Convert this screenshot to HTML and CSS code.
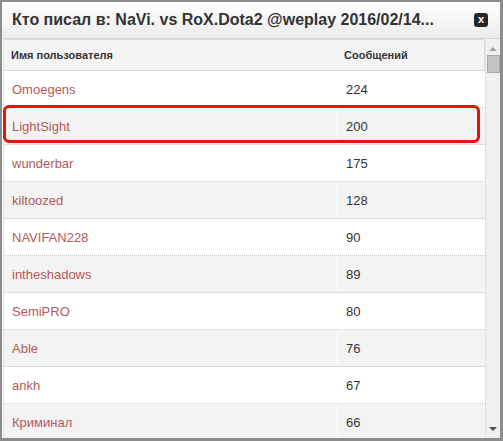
FILE: index.html
```html
<!DOCTYPE html>
<html lang="ru">
<head>
<meta charset="utf-8">
<link rel="stylesheet" href="styles.css">
</head>
<body>
<div class="dialog">
  <div class="titlebar">
    <span class="title">Кто писал в: NaVi. vs RoX.Dota2 @weplay 2016/02/14...</span>
    <span class="close">x</span>
  </div>
  <div class="content">
    <div class="table">
      <div class="head">
        <div class="c1">Имя пользователя</div>
        <div class="c2">Сообщений</div>
      </div>
      <div class="row"><div class="c1 name">Omoegens</div><div class="c2">224</div></div>
      <div class="row alt hl"><div class="c1 name">LightSight</div><div class="c2">200</div><span class="mark"></span></div>
      <div class="row"><div class="c1 name">wunderbar</div><div class="c2">175</div></div>
      <div class="row alt"><div class="c1 name">kiltoozed</div><div class="c2">128</div></div>
      <div class="row"><div class="c1 name">NAVIFAN228</div><div class="c2">90</div></div>
      <div class="row alt"><div class="c1 name">intheshadows</div><div class="c2">89</div></div>
      <div class="row"><div class="c1 name">SemiPRO</div><div class="c2">80</div></div>
      <div class="row alt"><div class="c1 name">Able</div><div class="c2">76</div></div>
      <div class="row"><div class="c1 name">ankh</div><div class="c2">67</div></div>
      <div class="row alt"><div class="c1 name">Криминал</div><div class="c2">66</div></div>
    </div>
    <div class="scrollbar">
      <span class="arrow up"></span>
      <span class="thumb"></span>
      <span class="spacer"></span>
      <span class="arrow down"></span>
    </div>
  </div>
</div>
</body>
</html>
```
FILE: styles.css
```css
html, body {
  margin: 0;
  padding: 0;
  background: #8c8c8c;
  font-family: "Liberation Sans", Arial, sans-serif;
}
body {
  width: 503px;
  height: 441px;
  overflow: hidden;
}
.dialog {
  margin: 2px 0 0 2px;
  width: 498px;
  height: 436px;
  background: #fff;
  display: flex;
  flex-direction: column;
  overflow: hidden;
}
.titlebar {
  height: 36px;
  flex: none;
  display: flex;
  align-items: center;
  padding: 0 10px 0 10px;
  background: linear-gradient(#ffffff, #ececec);
  border-bottom: 1px solid #d6d6d6;
}
.title {
  flex: 1;
  font-weight: bold;
  font-size: 16px;
  color: #333;
  white-space: nowrap;
}
.close {
  width: 14px;
  height: 14px;
  border-radius: 3px;
  background: #262626;
  color: #fff;
  font-weight: bold;
  font-size: 11px;
  line-height: 12px;
  text-align: center;
  margin-right: 2px;
}
.content {
  flex: 1;
  display: flex;
  padding-left: 1px;
  overflow: hidden;
}
.table {
  width: 481px;
  flex: none;
  border-left: 1px solid #e2e2e2;
}
.head {
  display: flex;
  height: 30px;
  align-items: center;
  background: #f4f4f4;
  border: 1px solid #dcdcdc;
  border-left: none;
  font-weight: bold;
  font-size: 11px;
  color: #333;
}
.c1 {
  width: 333px;
  padding-left: 7px;
  box-sizing: border-box;
}
.c2 {
  flex: 1;
  padding-left: 9px;
}
.head .c2 { padding-left: 7px; }
.row {
  position: relative;
  display: flex;
  align-items: center;
  height: 36px;
  border-bottom: 1px dotted #c8c8c8;
  font-size: 13px;
  color: #333;
  background: #fff;
}
.row .c1 { padding-left: 8px; }
.row.alt { background: #f3f3f3; }
.row.alt .c2 { border-left: 1px solid #fff; height: 100%; display: flex; align-items: center; padding-left: 8px; }
.name { color: #b5595a; }
.mark {
  position: absolute;
  left: -1px;
  top: -3px;
  width: 471px;
  height: 32px;
  border: 3px solid #e3130d;
  border-radius: 6px;
}
.scrollbar {
  flex: 1;
  display: flex;
  flex-direction: column;
  align-items: center;
  background: #f0f0f0;
  border-left: 1px solid #e2e2e2;
}
.arrow {
  width: 0;
  height: 0;
  border-left: 4px solid transparent;
  border-right: 4px solid transparent;
}
.up {
  margin-top: 8px;
  border-bottom: 4px solid #a3a3a3;
}
.down {
  margin-bottom: 7px;
  border-top: 4px solid #505050;
}
.thumb {
  margin-top: 4px;
  width: 11px;
  height: 16px;
  background: #c2c2c2;
  border: 1px solid #a9a9a9;
}
.spacer { flex: 1; }
```
